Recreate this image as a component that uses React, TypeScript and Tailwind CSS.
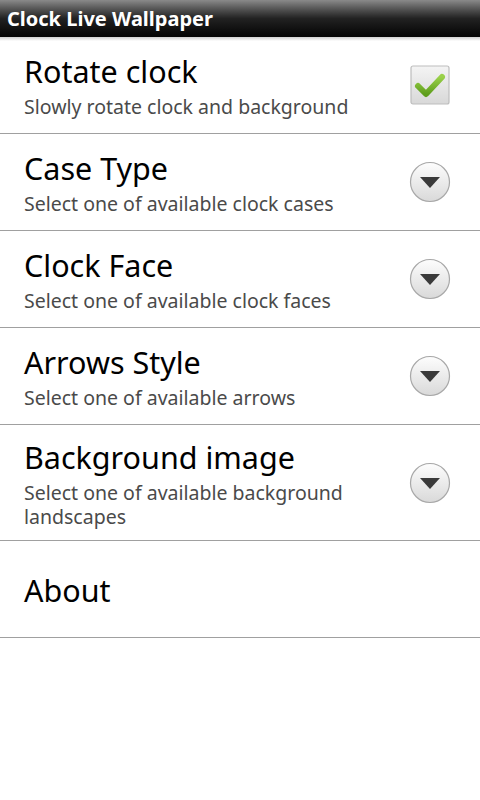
import React from "react";

const font = { fontFamily: '"Noto Sans", "Open Sans", sans-serif' };

function DropIcon() {
  return (
    <svg width="42" height="42" viewBox="0 0 42 42" className="shrink-0">
      <defs>
        <linearGradient id="dg" x1="0" y1="0" x2="0" y2="1">
          <stop offset="0" stopColor="#fdfdfd" />
          <stop offset="1" stopColor="#d9d9d9" />
        </linearGradient>
      </defs>
      <circle cx="21" cy="21" r="19.5" fill="url(#dg)" stroke="#a8a8a8" strokeWidth="1.2" />
      <path d="M11 16 L31 16 L21 27 Z" fill="#3a3a3a" />
    </svg>
  );
}

function CheckIcon() {
  return (
    <svg width="42" height="42" viewBox="0 0 42 42" className="shrink-0">
      <defs>
        <linearGradient id="cg" x1="0" y1="0" x2="0" y2="1">
          <stop offset="0" stopColor="#f4f4f4" />
          <stop offset="1" stopColor="#d8d8d8" />
        </linearGradient>
        <linearGradient id="gg" x1="0" y1="0" x2="0" y2="1">
          <stop offset="0" stopColor="#9ad14a" />
          <stop offset="1" stopColor="#5e9e1c" />
        </linearGradient>
      </defs>
      <rect x="2" y="2" width="38" height="38" rx="2" fill="url(#cg)" stroke="#bdbdbd" strokeWidth="1.2" />
      <path d="M9 22 L17 30 L33 13" fill="none" stroke="url(#gg)" strokeWidth="6" strokeLinecap="round" strokeLinejoin="round" />
    </svg>
  );
}

function Row({ title, sub, icon, h }: { title: string; sub?: string; icon?: React.ReactNode; h: string }) {
  return (
    <div className={`flex items-center justify-between pl-6 pr-[29px] border-b border-[#a0a0a0] ${h}`}>
      <div className="flex flex-col pt-[2px] max-w-[350px]">
        <div className="text-[30.5px] leading-[36px] text-black">{title}</div>
        {sub && <div className="text-[19.5px] leading-[24px] text-[#4a4a4a] mt-[6px]">{sub}</div>}
      </div>
      {icon}
    </div>
  );
}

export default function App() {
  return (
    <div className="w-[480px] h-[800px] bg-white" style={font}>
      <div className="h-[37px] flex items-center px-[7px] bg-gradient-to-b from-[#8a8a8a] via-[#222] to-[#050505]">
        <span className="text-white font-bold text-[20px] leading-none">Clock Live Wallpaper</span>
      </div>
      <div className="h-[4px] bg-gradient-to-b from-[#cfcfcf] to-white -mb-[4px] relative" />
      <Row h="h-[97px]" title="Rotate clock" sub="Slowly rotate clock and background" icon={<CheckIcon />} />
      <Row h="h-[97px]" title="Case Type" sub="Select one of available clock cases" icon={<DropIcon />} />
      <Row h="h-[97px]" title="Clock Face" sub="Select one of available clock faces" icon={<DropIcon />} />
      <Row h="h-[97px]" title="Arrows Style" sub="Select one of available arrows" icon={<DropIcon />} />
      <Row
        h="h-[116px]"
        title="Background image"
        sub={"Select one of available background landscapes"}
        icon={<DropIcon />}
      />
      <Row h="h-[97px]" title="About" />
    </div>
  );
}
